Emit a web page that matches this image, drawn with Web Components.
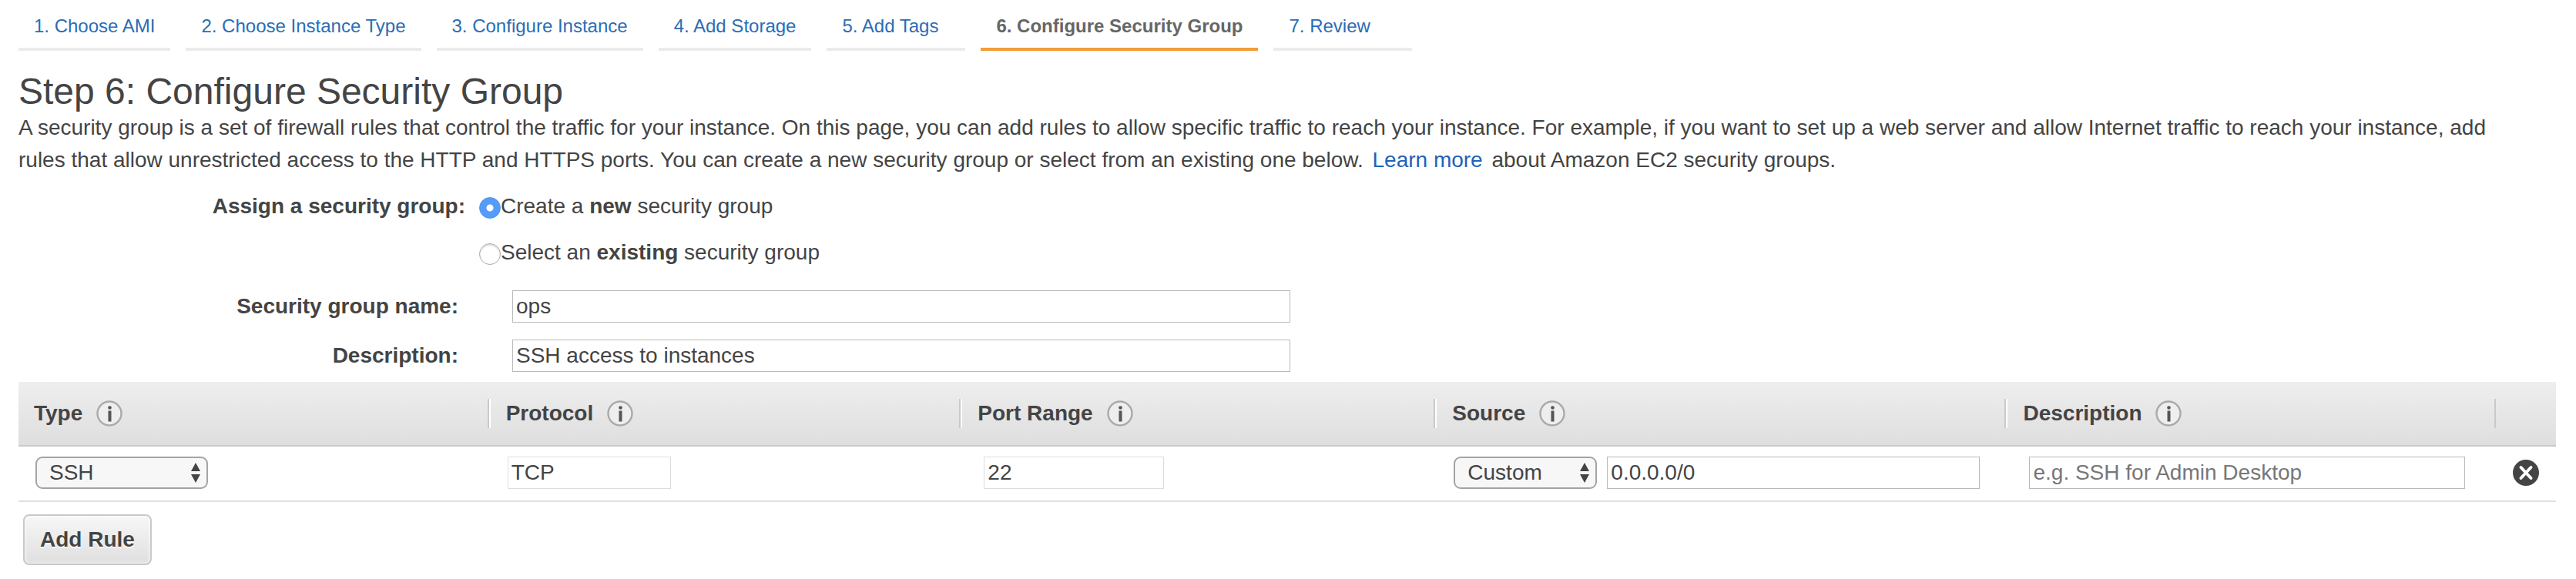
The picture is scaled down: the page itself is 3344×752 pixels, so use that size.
<!DOCTYPE html>
<html lang="en">
<head>
<meta charset="utf-8">
<title>Step 6: Configure Security Group</title>
<style>
  body {
    margin: 0;
    padding: 0 26px 18px 24px;
    background: #fff;
    color: #444;
    font: 28px/42px "Liberation Sans", Arial, sans-serif;
  }
</style>
</head>
<body>
<wizard-steps>
  <wizard-step>1. Choose AMI</wizard-step>
  <wizard-step>2. Choose Instance Type</wizard-step>
  <wizard-step>3. Configure Instance</wizard-step>
  <wizard-step>4. Add Storage</wizard-step>
  <wizard-step>5. Add Tags</wizard-step>
  <wizard-step current>6. Configure Security Group</wizard-step>
  <wizard-step>7. Review</wizard-step>
</wizard-steps>
<step-intro>
  <span slot="title">Step 6: Configure Security Group</span>
  A security group is a set of firewall rules that control the traffic for your instance. On this page, you can add rules to allow specific traffic to reach your instance. For example, if you want to set up a web server and allow Internet traffic to reach your instance, add rules that allow unrestricted access to the HTTP and HTTPS ports. You can create a new security group or select from an existing one below.
  <help-link>Learn more</help-link>
  about Amazon EC2 security groups.
</step-intro>
<group-choice></group-choice>
<field-stack>
  <text-field label="Security group name:" value="ops"></text-field>
  <text-field label="Description:" value="SSH access to instances"></text-field>
</field-stack>
<rules-table></rules-table>
<push-button>Add Rule</push-button>

<script>
  const define = (name, html, setup) => customElements.define(name, class extends HTMLElement {
    constructor() {
      super();
      this.attachShadow({ mode: 'open' }).innerHTML = html;
    }
    connectedCallback() {
      if (setup) setup(this, this.shadowRoot);
    }
  });

  define('wizard-steps', `
    <style>
      :host { display: block; }
      nav { display: flex; flex-wrap: wrap; gap: 20px; }
    </style>
    <nav aria-label="Launch steps"><slot></slot></nav>
  `);

  define('wizard-step', `
    <style>
      :host { display: block; box-sizing: border-box; min-width: 180px; padding: 20px 20px 14px; border-bottom: 4px solid #ebebeb; font-size: 24px; line-height: 28px; white-space: nowrap; }
      :host([current]) { border-color: #f29d38; font-weight: bold; }
      a { color: #2a6db5; text-decoration: none; }
      :host([current]) a { color: #666; }
    </style>
    <a href="#"><slot></slot></a>
  `, (host, root) => {
    if (host.hasAttribute('current')) root.querySelector('a').setAttribute('aria-current', 'step');
  });

  define('step-intro', `
    <style>
      :host { display: block; margin-top: 27px; }
      h1 { margin: 0; font-size: 48px; line-height: 52px; font-weight: normal; }
      p { margin: 0; padding-right: 40px; }
    </style>
    <h1><slot name="title"></slot></h1>
    <p><slot></slot></p>
  `);

  define('help-link', `
    <style>
      :host { display: inline-block; margin: 0 4px; }
      a { color: #2062b8; text-decoration: none; }
    </style>
    <a href="#"><slot></slot></a>
  `);

  define('group-choice', `
    <style>
      :host { display: block; margin-top: 9px; }
      div { display: flex; gap: 16px; line-height: 60px; }
      #caption { width: 580px; text-align: right; font-weight: bold; }
      .options { flex-direction: column; gap: 0; }
      [role="radiogroup"] { gap: 18px; }
      label { display: flex; align-items: center; }
      input { appearance: none; box-sizing: border-box; width: 28px; height: 28px; margin: 4px 0 0; border: 1px solid #aaa; border-radius: 50%; background: #fff; box-shadow: inset 0 2px 2px #ddd; }
      input:checked { border-color: #5096f5; background: radial-gradient(circle, #fff 4px, #559bf8 5px); box-shadow: none; }
    </style>
    <div role="radiogroup" aria-labelledby="caption">
      <span id="caption">Assign a security group:</span>
      <div class="options">
        <label><input type="radio" name="group" checked><span>Create a <b>new</b> security group</span></label>
        <label><input type="radio" name="group"><span>Select an <b>existing</b> security group</span></label>
      </div>
    </div>
  `);

  define('field-stack', `
    <style>
      :host { display: grid; gap: 22px; margin-top: 19px; }
    </style>
    <slot></slot>
  `);

  define('text-field', `
    <style>
      :host { display: flex; align-items: center; gap: 70px; }
      label { width: 571px; text-align: right; font-weight: bold; }
      input { flex: 1; max-width: 1010px; min-width: 0; box-sizing: border-box; height: 42px; padding: 0 4px; border: 1px solid #b9b9b9; background: #fff; color: inherit; font: inherit; }
    </style>
    <label for="field"></label>
    <input id="field" type="text">
  `, (host, root) => {
    root.querySelector('label').textContent = host.getAttribute('label');
    root.querySelector('input').value = host.getAttribute('value');
  });

  define('info-icon', `
    <style>
      :host { display: block; width: 34px; height: 34px; }
      svg { display: block; }
    </style>
    <svg width="34" height="34" viewBox="0 0 34 34" aria-hidden="true">
      <circle cx="17" cy="17" r="15.5" fill="#eee" stroke="#aaa" stroke-width="2.4"/>
      <circle cx="17.5" cy="9.5" r="2.3" fill="#555"/>
      <path d="M17.5 13.500v14" stroke="#555" stroke-width="4"/>
    </svg>
  `);

  define('drop-down', `
    <style>
      :host { display: grid; width: 224px; flex: none; }
      select, svg { grid-area: 1 / 1; }
      select { appearance: none; box-sizing: border-box; width: 100%; height: 42px; padding: 0 40px 0 16px; border: 2px solid #a4a4a4; border-radius: 9px; background: #f7f7f7; color: inherit; font: inherit; line-height: 36px; }
      svg { justify-self: end; align-self: center; margin-right: 9px; pointer-events: none; }
    </style>
    <select><option></option></select>
    <svg width="14" height="28" viewBox="0 0 14 28" aria-hidden="true"><path d="M7 1l6 11H1zM7 27l6-11H1z" fill="#444"/></svg>
  `, (host, root) => {
    root.querySelector('option').textContent = host.getAttribute('value');
    root.querySelector('select').setAttribute('aria-label', host.getAttribute('label'));
  });

  define('rules-table', `
    <style>
      :host { display: block; margin-top: 13px; }
      table { width: 100%; table-layout: fixed; border-collapse: separate; border-spacing: 0; }
      .narrow { width: 18.6%; }
      .port { width: 18.7%; }
      .wide { width: 22.5%; }
      .remove { width: 78px; }
      thead { background: linear-gradient(#eee, #dedede); }
      th { height: 82px; box-sizing: content-box; padding: 0; border-bottom: 2px solid #c9c9c9; text-align: left; }
      th div { display: flex; align-items: center; gap: 18px; height: 38px; padding-left: 20px; border-right: 2px solid #fff; box-shadow: inset -2px 0 #c9c9c9; }
      th:nth-child(5) div { border: 0; }
      th:last-child div { border: 0; box-shadow: none; }
      td { padding: 13px 0 15px 22px; border-bottom: 2px solid #e0e0e0; }
      td:nth-child(3), td:nth-child(5) { padding-left: 28px; }
      td:nth-child(4) { padding-right: 36px; }
      td:nth-child(5) { padding-right: 40px; }
      td div { display: flex; gap: 13px; }
      drop-down.source { width: 186px; }
      input { box-sizing: border-box; width: 100%; min-width: 0; height: 42px; padding: 0 4px; border: 1px solid #b9b9b9; background: #fff; color: inherit; font: inherit; }
      input:read-only { width: 212px; border-color: #ddd; }
      td:nth-child(3) input { width: 234px; }
      input::placeholder { color: #777; opacity: 1; }
      button { display: block; padding: 0; border: 0; background: none; }
      svg { display: block; }
    </style>
    <table>
      <colgroup><col class="narrow"><col class="narrow"><col class="port"><col class="wide"><col><col class="remove"></colgroup>
      <thead>
        <tr>
          <th scope="col"><div>Type<info-icon></info-icon></div></th>
          <th scope="col"><div>Protocol<info-icon></info-icon></div></th>
          <th scope="col"><div>Port Range<info-icon></info-icon></div></th>
          <th scope="col"><div>Source<info-icon></info-icon></div></th>
          <th scope="col"><div>Description<info-icon></info-icon></div></th>
          <th><div></div></th>
        </tr>
      </thead>
      <tbody>
        <tr>
          <td><drop-down label="Type" value="SSH"></drop-down></td>
          <td><div><input type="text" aria-label="Protocol" value="TCP" readonly></div></td>
          <td><div><input type="text" aria-label="Port Range" value="22" readonly></div></td>
          <td><div><drop-down class="source" label="Source" value="Custom"></drop-down><input type="text" aria-label="Source address" value="0.0.0.0/0"></div></td>
          <td><div><input type="text" aria-label="Description" placeholder="e.g. SSH for Admin Desktop"></div></td>
          <td><button type="button" aria-label="Remove rule">
            <svg width="34" height="34" viewBox="0 0 34 34" aria-hidden="true"><circle cx="17" cy="17" r="17" fill="#444"/><path d="M10.500 10l13 14M23.500 10l-13 14" stroke="#fff" stroke-width="4" stroke-linecap="round"/></svg>
          </button></td>
        </tr>
      </tbody>
    </table>
  `);

  define('push-button', `
    <style>
      :host { display: block; margin: 16px 6px 0; }
      button { height: 66px; padding: 0 20px; border: 2px solid #c9c9c9; border-radius: 8px; background: linear-gradient(#f7f7f7, #dfdfdf); box-shadow: inset 0 0 4px #fff; color: inherit; font: inherit; font-weight: bold; text-shadow: 0 2px #fff; }
    </style>
    <button type="button"><slot></slot></button>
  `);
</script>
</body>
</html>
